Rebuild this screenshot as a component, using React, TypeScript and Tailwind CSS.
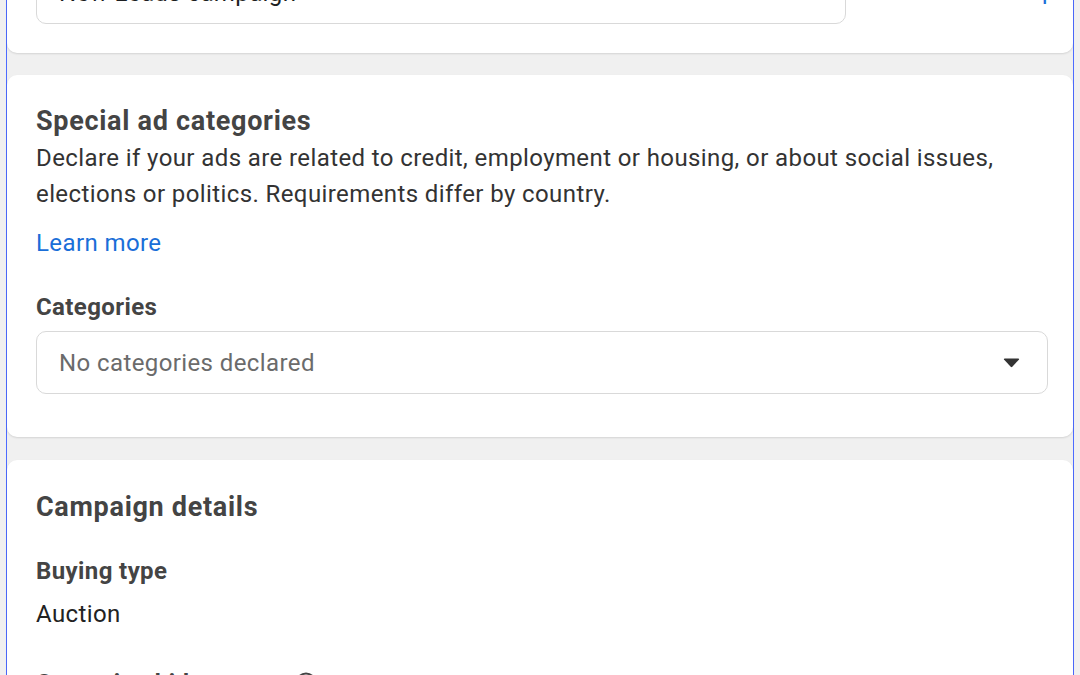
export default function App() {
  return (
    <div
      className="h-[675px] w-[1080px] overflow-hidden bg-[#f0f0f0] px-[6px]"
      style={{ fontFamily: 'Roboto, "Liberation Sans", sans-serif' }}
    >
      <div className="flex h-full flex-col border-x border-[#4d6bff] bg-[#f0f0f0]">
        {/* name card, scrolled off the top */}
        <div className="-mt-[40px] flex h-[93px] shrink-0 items-start rounded-b-[10px] bg-white pl-[29px] pr-[17px] pt-[2px] shadow-[0_1px_2px_rgba(0,0,0,0.12)]">
          <div className="flex h-[62px] w-[810px] items-center rounded-[10px] border border-[#d9d9d9] px-[22px] text-[24px] tracking-[0.4px] text-[#1c1e21]">
            New Leads campaign
          </div>
          <div className="mt-[14px] flex-1 text-right text-[24px] leading-[30px] tracking-[0.4px] text-[#1a6ed8]">
            Help
          </div>
        </div>

        {/* special ad categories */}
        <div className="mt-[22px] shrink-0 rounded-[10px] bg-white pb-[43px] pl-[29px] pr-[25px] pt-[30px] shadow-[0_1px_2px_rgba(0,0,0,0.12)]">
          <h2 className="text-[27px] font-bold leading-[32px] tracking-[0.7px] text-[#444]">
            Special ad categories
          </h2>
          <p className="mt-[3px] text-[24px] leading-[36px] tracking-[0.4px] text-[#333]">
            Declare if your ads are related to credit, employment or housing, or about social issues,
            <br />
            elections or politics. Requirements differ by country.
          </p>
          <a className="mt-[13px] block text-[24px] leading-[36px] tracking-[0.4px] text-[#1a6ed8]">
            Learn more
          </a>
          <div className="mt-[31px] text-[24px] font-bold leading-[30px] tracking-[0.4px] text-[#444]">
            Categories
          </div>
          <div className="mt-[9px] flex h-[63px] items-center justify-between rounded-[10px] border border-[#d9d9d9] pl-[22px] pr-[27px]">
            <span className="text-[24px] tracking-[0.4px] text-[#6b6b6b]">No categories declared</span>
            <svg width="17" height="10" viewBox="0 0 17 10">
              <path d="M1 1.5 Q0.5 0.5 1.8 0.5 H15.2 Q16.5 0.5 16 1.5 L9.3 8.8 Q8.5 9.6 7.7 8.8 Z" fill="#333" />
            </svg>
          </div>
        </div>

        {/* campaign details */}
        <div className="mt-[23px] flex-1 rounded-t-[10px] bg-white px-[29px] pt-[31px] shadow-[0_1px_2px_rgba(0,0,0,0.12)]">
          <h2 className="text-[27px] font-bold leading-[32px] tracking-[0.7px] text-[#444]">
            Campaign details
          </h2>
          <div className="mt-[33px] text-[24px] font-bold leading-[30px] tracking-[0.4px] text-[#444]">
            Buying type
          </div>
          <div className="mt-[13px] text-[24px] leading-[30px] tracking-[0.4px] text-[#222]">Auction</div>
          <div className="mt-[39px] flex items-center gap-2 text-[24px] font-bold leading-[30px] tracking-[0.4px] text-[#444]">
            Campaign bid strategy
            <svg width="22" height="22" viewBox="0 0 22 22">
              <circle cx="11" cy="11" r="9.5" fill="none" stroke="#444" strokeWidth="2" />
            </svg>
          </div>
        </div>
      </div>
    </div>
  )
}
